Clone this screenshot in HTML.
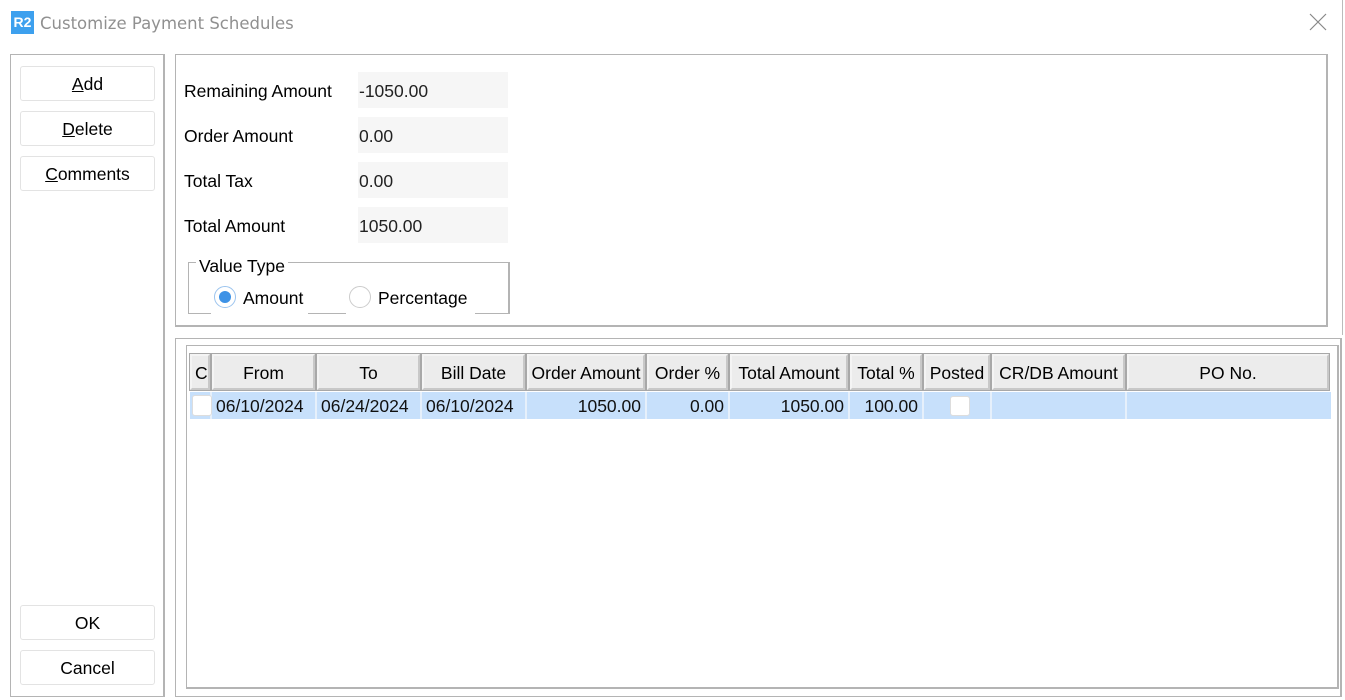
<!DOCTYPE html>
<html><head><style>
body{margin:0;width:1345px;height:700px;background:#fff;position:relative;overflow:hidden;font-family:"Liberation Sans",sans-serif;font-size:17.5px;color:#000}
.a{position:absolute;box-sizing:border-box}
.btn{position:absolute;left:20px;width:135px;height:35px;border:1px solid #e3e3e3;border-radius:3px;background:#fff;text-align:center;line-height:35px;box-sizing:border-box}
.lbl{position:absolute;left:184px}
.val{position:absolute;left:358px;width:150px;height:36px;background:#f6f6f6;line-height:38px;padding-left:1px;color:#222;box-sizing:border-box}
.h{position:absolute;top:354px;height:36px;background:#ececec;border:2px solid #c8c8c8;border-top-color:#f4f4f4;border-left-color:#f4f4f4;outline:1px solid #a8a8a8;text-align:center;line-height:34px;box-sizing:border-box;white-space:nowrap;overflow:hidden}
.d{position:absolute;top:392px;height:27px;background:#c7e0fb;line-height:28px;box-sizing:border-box;border-right:2px solid #e6f0fb;white-space:nowrap;padding:0 4px;color:#111}
.r{text-align:right}
</style></head><body>
<div class="a" style="left:11px;top:11px;width:23px;height:23px;background:#3da0ee;color:#fff;font-weight:bold;font-size:14px;line-height:23px;text-align:center">R2</div>
<div class="a" style="left:40px;top:12px;color:#909090;line-height:23px;font-family:'DejaVu Sans','Liberation Sans',sans-serif;font-size:16.5px">Customize Payment Schedules</div>
<svg class="a" style="left:1309px;top:13px" width="18" height="18"><path d="M1 1L17 17M17 1L1 17" stroke="#888" stroke-width="1.2"/></svg>
<div class="a" style="left:1342px;top:0;width:1px;height:335px;background:#bbb"></div>

<div class="a" style="left:10px;top:54px;width:155px;height:643px;border:1px solid #b4b4b4;border-right-width:2px"></div>
<div class="btn" style="top:66px"><u>A</u>dd</div>
<div class="btn" style="top:111px"><u>D</u>elete</div>
<div class="btn" style="top:156px"><u>C</u>omments</div>
<div class="btn" style="top:605px">OK</div>
<div class="btn" style="top:650px">Cancel</div>

<div class="a" style="left:175px;top:54px;width:1153px;height:273px;border:1px solid #b4b4b4;border-right-width:2px;border-bottom-width:2px"></div>
<div class="lbl" style="top:81px">Remaining Amount</div><div class="val" style="top:72px">-1050.00</div>
<div class="lbl" style="top:126px">Order Amount</div><div class="val" style="top:117px">0.00</div>
<div class="lbl" style="top:171px">Total Tax</div><div class="val" style="top:162px">0.00</div>
<div class="lbl" style="top:216px">Total Amount</div><div class="val" style="top:207px">1050.00</div>

<div class="a" style="left:188px;top:262px;width:322px;height:52px;border:1px solid #b4b4b4;border-right-width:2px;border-bottom:none"></div>
<div class="a" style="left:188px;top:313px;width:23px;height:1px;background:#b4b4b4"></div>
<div class="a" style="left:308px;top:313px;width:38px;height:1px;background:#b4b4b4"></div>
<div class="a" style="left:475px;top:313px;width:35px;height:1px;background:#b4b4b4"></div>
<div class="a" style="left:196px;top:256px;background:#fff;padding:0 3px;line-height:20px">Value Type</div>
<div class="a" style="left:214px;top:286px;width:22px;height:22px;border-radius:50%;border:1px solid #9cc4ee;background:#fff"></div>
<div class="a" style="left:219px;top:291px;width:12px;height:12px;border-radius:50%;background:#3d92e6"></div>
<div class="a" style="left:243px;top:288px">Amount</div>
<div class="a" style="left:349px;top:286px;width:22px;height:22px;border-radius:50%;border:1px solid #ccc;background:#fff"></div>
<div class="a" style="left:378px;top:288px">Percentage</div>

<div class="a" style="left:175px;top:338px;width:1167px;height:359px;border:1px solid #b4b4b4;border-right-width:2px"></div>
<div class="a" style="left:186px;top:345px;width:1153px;height:344px;border:1px solid #b4b4b4;border-right-width:2px;border-bottom-width:2px"></div>

<div class="h" style="left:190px;width:20px;text-align:left;padding-left:3px">C</div>
<div class="h" style="left:212px;width:103px">From</div>
<div class="h" style="left:317px;width:103px">To</div>
<div class="h" style="left:422px;width:103px">Bill Date</div>
<div class="h" style="left:527px;width:118px">Order Amount</div>
<div class="h" style="left:647px;width:81px">Order %</div>
<div class="h" style="left:730px;width:118px">Total Amount</div>
<div class="h" style="left:850px;width:72px">Total %</div>
<div class="h" style="left:924px;width:66px">Posted</div>
<div class="h" style="left:992px;width:133px">CR/DB Amount</div>
<div class="h" style="left:1127px;width:202px">PO No.</div>

<div class="d" style="left:190px;width:22px"></div>
<div class="a" style="left:192px;top:395px;width:20px;height:21px;background:#fff;border:1px solid #ddd;border-radius:3px"></div>
<div class="d" style="left:212px;width:105px">06/10/2024</div>
<div class="d" style="left:317px;width:105px">06/24/2024</div>
<div class="d" style="left:422px;width:105px">06/10/2024</div>
<div class="d r" style="left:527px;width:120px">1050.00</div>
<div class="d r" style="left:647px;width:83px">0.00</div>
<div class="d r" style="left:730px;width:120px">1050.00</div>
<div class="d r" style="left:850px;width:74px">100.00</div>
<div class="d" style="left:924px;width:68px"></div>
<div class="a" style="left:950px;top:396px;width:20px;height:20px;background:#fff;border:1px solid #ddd;border-radius:3px"></div>
<div class="d" style="left:992px;width:135px"></div>
<div class="d" style="left:1127px;width:204px;border-right:none"></div>
</body></html>
